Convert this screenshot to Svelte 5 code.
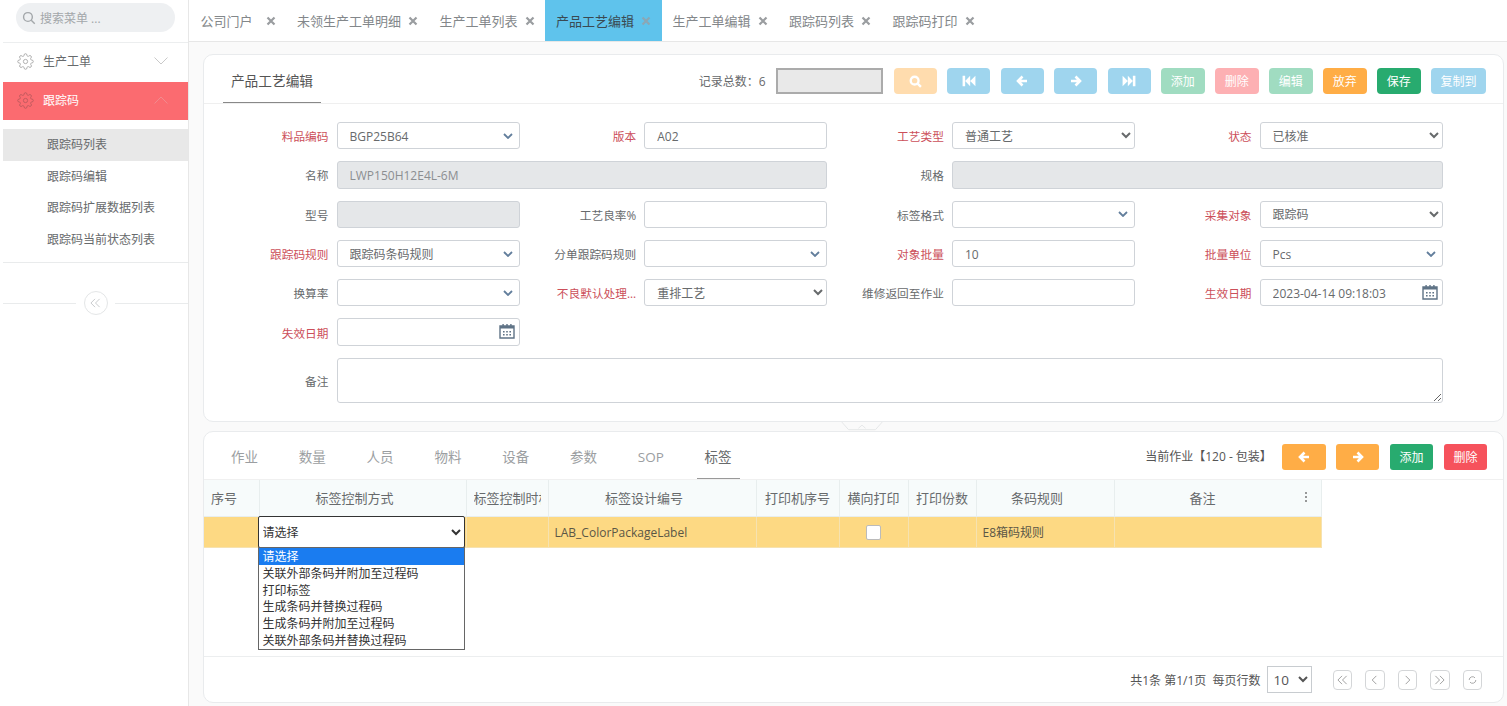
<script>
  const gearPath = "M19.4 15a1.65 1.65 0 0 0 .33 1.82l.06.06a2 2 0 0 1 0 2.83 2 2 0 0 1-2.83 0l-.06-.06a1.65 1.65 0 0 0-1.82-.33 1.65 1.65 0 0 0-1 1.51V21a2 2 0 0 1-2 2 2 2 0 0 1-2-2v-.09A1.65 1.65 0 0 0 9 19.4a1.65 1.65 0 0 0-1.82.33l-.06.06a2 2 0 0 1-2.83 0 2 2 0 0 1 0-2.83l.06-.06a1.65 1.65 0 0 0 .33-1.82 1.65 1.65 0 0 0-1.51-1H3a2 2 0 0 1-2-2 2 2 0 0 1 2-2h.09A1.65 1.65 0 0 0 4.6 9a1.65 1.65 0 0 0-.33-1.82l-.06-.06a2 2 0 0 1 0-2.83 2 2 0 0 1 2.83 0l.06.06a1.65 1.65 0 0 0 1.82.33H9a1.65 1.65 0 0 0 1-1.51V3a2 2 0 0 1 2-2 2 2 0 0 1 2 2v.09a1.65 1.65 0 0 0 1 1.51 1.65 1.65 0 0 0 1.82-.33l.06-.06a2 2 0 0 1 2.83 0 2 2 0 0 1 0 2.83l-.06.06a1.65 1.65 0 0 0-.33 1.82V9a1.65 1.65 0 0 0 1.51 1H21a2 2 0 0 1 2 2 2 2 0 0 1-2 2h-.09a1.65 1.65 0 0 0-1.51 1z";

  const tabs = [
    { name: "公司门户", cls: "wide" },
    { name: "未领生产工单明细" },
    { name: "生产工单列表" },
    { name: "产品工艺编辑", cls: "active" },
    { name: "生产工单编辑" },
    { name: "跟踪码列表" },
    { name: "跟踪码打印" }
  ];

  const subMenu = ["跟踪码列表", "跟踪码编辑", "跟踪码扩展数据列表", "跟踪码当前状态列表"];

  const fields = [
    { label: "料品编码", req: true, type: "select", value: "BGP25B64", blue: true },
    { label: "版本", req: true, type: "input", value: "A02" },
    { label: "工艺类型", req: true, type: "select", value: "普通工艺" },
    { label: "状态", req: true, type: "select", value: "已核准" },
    { label: "名称", type: "disabled", value: "LWP150H12E4L-6M", span: 2 },
    { label: "规格", type: "disabled", value: "", span: 2 },
    { label: "型号", type: "disabled", value: "" },
    { label: "工艺良率%", type: "input", value: "" },
    { label: "标签格式", type: "select", value: "", blue: true },
    { label: "采集对象", req: true, type: "select", value: "跟踪码" },
    { label: "跟踪码规则", req: true, type: "select", value: "跟踪码条码规则", blue: true },
    { label: "分单跟踪码规则", type: "select", value: "", blue: true },
    { label: "对象批量", req: true, type: "input", value: "10" },
    { label: "批量单位", req: true, type: "select", value: "Pcs", blue: true },
    { label: "换算率", type: "select", value: "", blue: true },
    { label: "不良默认处理...", req: true, type: "select", value: "重排工艺" },
    { label: "维修返回至作业", type: "input", value: "" },
    { label: "生效日期", req: true, type: "date", value: "2023-04-14 09:18:03" },
    { label: "失效日期", req: true, type: "date", value: "" },
    { label: "备注", type: "textarea", value: "", span: 4 }
  ];

  const detailTabs = ["作业", "数量", "人员", "物料", "设备", "参数", "SOP", "标签"];

  // pad: room the grid keeps on the right of a wide header
  const columns = [
    { name: "序号", width: 55 },
    { name: "标签控制方式", width: 207, pad: 16 },
    { name: "标签控制时机", width: 82 },
    { name: "标签设计编号", width: 208, pad: 16 },
    { name: "打印机序号", width: 83 },
    { name: "横向打印", width: 69 },
    { name: "打印份数", width: 68 },
    { name: "条码规则", width: 138, pad: 16 },
    { name: "备注", width: 207, pad: 30 }
  ];

  const options = ["请选择", "关联外部条码并附加至过程码", "打印标签", "生成条码并替换过程码", "生成条码并附加至过程码", "关联外部条码并替换过程码"];
</script>

{#snippet close()}
  <svg class="close" viewBox="0 0 10 10"><path d="M1.5 1.5l7 7M8.5 1.5l-7 7" /></svg>
{/snippet}

{#snippet arrowLeft()}
  <svg class="glyph" viewBox="0 0 12 12"><path d="M6.5 1.5L2 6l4.5 4.5M2.5 6H11" /></svg>
{/snippet}

{#snippet arrowRight()}
  <svg class="glyph" viewBox="0 0 12 12"><path d="M5.5 1.5L10 6l-4.5 4.5M9.5 6H1" /></svg>
{/snippet}

{#snippet calendar()}
  <svg class="calendar" viewBox="0 0 16 16">
    <path d="M1 3h14v12H1z" fill="none" stroke="#5f7386" stroke-width="1.4" />
    <path d="M1 3h14v2.6H1zM3.4 1h1.4v3H3.4zM7.3 1h1.4v3H7.3zM11.2 1h1.4v3h-1.4z" fill="#5f7386" />
    <path d="M4 8h1.6v1.4H4zM7.2 8h1.6v1.4H7.2zM10.4 8H12v1.4h-1.6zM4 11h1.6v1.4H4zM7.2 11h1.6v1.4H7.2zM10.4 11H12v1.4h-1.6z" fill="#5f7386" />
  </svg>
{/snippet}

<div class="layout">
  <aside class="sidebar">
    <div class="search">
      <svg class="search-icon" viewBox="0 0 16 16"><circle cx="6.8" cy="6.8" r="5" /><path d="M10.6 10.6l4 4" /></svg>
      <span>搜索菜单 ...</span>
    </div>

    <div class="menu-item">
      <svg class="gear" viewBox="0 0 24 24"><circle cx="12" cy="12" r="3" /><path d={gearPath} /></svg>
      <span class="menu-name">生产工单</span>
      <svg class="chev" viewBox="0 0 14 8"><path d="M.5.5L7 7 13.5.5" /></svg>
    </div>
    <div class="menu-item open">
      <svg class="gear" viewBox="0 0 24 24"><circle cx="12" cy="12" r="3" /><path d={gearPath} /></svg>
      <span class="menu-name">跟踪码</span>
      <svg class="chev" viewBox="0 0 14 8"><path d="M.5 7.5L7 1l6.5 6.5" /></svg>
    </div>

    <ul class="sub-menu">
      {#each subMenu as item, i}
        <li class:current={i === 0}>{item}</li>
      {/each}
    </ul>

    <div class="collapse">
      <span class="collapse-btn">
        <svg viewBox="0 0 12 10"><path d="M5.5.5L1 5l4.5 4.5M10.5.5L6 5l4.5 4.5" /></svg>
      </span>
    </div>
  </aside>

  <div class="main">
    <nav class="tabbar">
      {#each tabs as tab}
        <div class="tab {tab.cls || ''}">
          <span>{tab.name}</span>
          {@render close()}
        </div>
      {/each}
    </nav>

    <div class="content">
      <section class="card top-card">
        <header class="card-head">
          <div class="card-title">产品工艺编辑</div>
          <div class="toolbar">
            <span class="total">记录总数：6</span>
            <input class="jump" type="text" />
            <button class="btn nav orange-soft">
              <svg class="glyph big" viewBox="0 0 12 12"><circle cx="5.2" cy="5.2" r="3.6" /><path d="M8 8l3 3" /></svg>
            </button>
            <button class="btn nav blue-soft">
              <svg class="glyph solid" viewBox="0 0 12 12"><path d="M.5 1.500h2.200v9H.5zM2.700 6l4.300-4.500v9zM7 6l4.500-4.500v9z" /></svg>
            </button>
            <button class="btn nav blue-soft">{@render arrowLeft()}</button>
            <button class="btn nav blue-soft">{@render arrowRight()}</button>
            <button class="btn nav blue-soft">
              <svg class="glyph solid" viewBox="0 0 12 12"><path d="M11.500 1.500H9.300v9h2.200zM9.300 6L5 1.500v9zM5 6L.5 1.500v9z" /></svg>
            </button>
            <button class="btn green-soft">添加</button>
            <button class="btn red-soft">删除</button>
            <button class="btn green-soft">编辑</button>
            <button class="btn orange">放弃</button>
            <button class="btn green">保存</button>
            <button class="btn blue-soft copy">复制到</button>
          </div>
        </header>

        <div class="form">
          {#each fields as f}
            <div class="field" class:span2={f.span === 2} class:span4={f.span === 4}>
              <label class:req={f.req}>{f.label}</label>
              {#if f.type === "select"}
                <select class="control" class:blue={f.blue}>
                  <option>{f.value}</option>
                </select>
              {:else if f.type === "textarea"}
                <textarea class="control area"></textarea>
              {:else if f.type === "date"}
                <div class="date-wrap">
                  <input class="control" type="text" value={f.value} />
                  {@render calendar()}
                </div>
              {:else}
                <input class="control" type="text" value={f.value} disabled={f.type === "disabled"} />
              {/if}
            </div>
          {/each}
        </div>
      </section>

      <div class="splitter">
        <svg viewBox="0 0 46 10"><path d="M.5 0L8 8.5h30L45.5 0" /><path d="M19 7l4-3.5L27 7" /></svg>
      </div>

      <section class="card bottom-card">
        <header class="detail-head">
          <div class="detail-tabs">
            {#each detailTabs as t, i}
              <span class="detail-tab" class:on={i === detailTabs.length - 1}>{t}</span>
            {/each}
          </div>
          <div class="detail-tools">
            <span class="current-op">当前作业【120 - 包装】</span>
            <button class="btn orange op">{@render arrowLeft()}</button>
            <button class="btn orange op">{@render arrowRight()}</button>
            <button class="btn green op">添加</button>
            <button class="btn danger op">删除</button>
          </div>
        </header>

        <div class="table-wrap">
          <table>
            <colgroup>
              {#each columns as c}
                <col style="width: {c.width}px" />
              {/each}
            </colgroup>
            <thead>
              <tr>
                {#each columns as c, i}
                  <th>
                    <div class="th-inner" class:first={i === 0} style="padding-right: {c.pad || 0}px">{c.name}</div>
                    {#if i === columns.length - 1}
                      <svg class="dots" viewBox="0 0 4 12"><circle cx="2" cy="2" r="1" /><circle cx="2" cy="6" r="1" /><circle cx="2" cy="10" r="1" /></svg>
                    {/if}
                  </th>
                {/each}
              </tr>
            </thead>
            <tbody>
              <tr>
                <td></td>
                <td class="select-cell">
                  <select class="row-select"><option>请选择</option></select>
                  <div class="dropdown">
                    {#each options as o, i}
                      <div class="opt" class:picked={i === 0}>{o}</div>
                    {/each}
                  </div>
                </td>
                <td></td>
                <td>LAB_ColorPackageLabel</td>
                <td></td>
                <td class="center"><input class="check" type="checkbox" /></td>
                <td></td>
                <td>E8箱码规则</td>
                <td></td>
              </tr>
            </tbody>
          </table>
        </div>

        <footer class="pager">
          <span>共1条 第1/1页&nbsp; 每页行数</span>
          <select class="page-size"><option>10</option></select>
          <div class="pager-btns">
            <button class="pg"><svg viewBox="0 0 12 10"><path d="M5.5.5L1 5l4.5 4.5M10.5.5L6 5l4.5 4.5" /></svg></button>
            <button class="pg"><svg viewBox="0 0 12 10"><path d="M8 .5L3.5 5 8 9.5" /></svg></button>
            <button class="pg"><svg viewBox="0 0 12 10"><path d="M4 .5L8.5 5 4 9.5" /></svg></button>
            <button class="pg"><svg viewBox="0 0 12 10"><path d="M1.500 .5L6 5l-4.500 4.500M6.500 .5L11 5l-4.500 4.500" /></svg></button>
            <button class="pg"><svg viewBox="0 0 12 12"><path d="M2 6a4 4 0 0 1 7-2.600M10 6a4 4 0 0 1-7 2.600" /></svg></button>
          </div>
        </footer>
      </section>
    </div>
  </div>
</div>

<style>
  :global(body) {
    margin: 0;
    background: #fff;
    overflow: hidden;
  }

  .layout {
    display: flex;
    width: 1507px;
    height: 706px;
    overflow: hidden;
    font-family: "Open Sans", "Noto Sans CJK SC", sans-serif;
    font-size: 12px;
    color: #676a6c;
  }

  button, input, select, textarea {
    font-family: inherit;
  }

  /* sidebar */
  .sidebar {
    width: 189px;
    flex-shrink: 0;
    box-sizing: border-box;
    padding-left: 3px;
    border-right: 1px solid #e7e7e7;
  }

  .search {
    display: flex;
    align-items: center;
    gap: 4px;
    height: 29px;
    width: 159px;
    margin: 3px 0 10px 13px;
    padding-left: 6px;
    box-sizing: border-box;
    border-radius: 15px;
    background: #eef0f2;
    color: #a3a7aa;
  }

  .search-icon {
    width: 14px;
    height: 14px;
    fill: none;
    stroke: #a3a7aa;
    stroke-width: 1.6;
  }

  .menu-item {
    display: flex;
    align-items: center;
    height: 36px;
    padding: 0 20px 3px 14px;
    border-top: 1px solid #eceeef;
    color: #676a6c;
    font-size: 12px;
  }

  .menu-item.open {
    height: 36px;
    padding-bottom: 2px;
    border-top: 0;
    background: #fb6b70;
    color: #fff;
  }

  .gear {
    width: 17px;
    height: 17px;
    margin-right: 9px;
    fill: none;
    stroke: #a4a4a4;
    stroke-width: 1.2;
  }

  .open .gear {
    stroke: #b9585c;
  }

  .menu-name {
    flex: 1;
  }

  .chev {
    width: 14px;
    height: 8px;
    fill: none;
    stroke: #bbb;
    stroke-width: 0.8;
  }

  .open .chev {
    stroke: #f09295;
  }

  .sub-menu {
    list-style: none;
    margin: 9px 0 0;
    padding: 0 0 7px;
    border-bottom: 1px solid #e9ebec;
  }

  .sub-menu li {
    height: 31.5px;
    line-height: 31px;
    padding-left: 44px;
    color: #676a6c;
  }

  .sub-menu li.current {
    background: #e8e8e8;
  }

  .collapse {
    display: flex;
    align-items: center;
    margin-top: 28px;
    height: 24px;
    background: linear-gradient(#e9ebec, #e9ebec) left center / 73px 1px no-repeat,
      linear-gradient(#e9ebec, #e9ebec) right center / 73px 1px no-repeat;
    justify-content: center;
  }

  .collapse-btn {
    display: flex;
    align-items: center;
    justify-content: center;
    width: 22px;
    height: 22px;
    border: 1px solid #e4e6e7;
    border-radius: 50%;
  }

  .collapse-btn svg {
    width: 11px;
    height: 10px;
    fill: none;
    stroke: #c4c6c8;
  }

  /* tabs */
  .main {
    flex: 1;
    min-width: 0;
    display: flex;
    flex-direction: column;
  }

  .tabbar {
    display: flex;
    height: 42px;
    box-sizing: border-box;
    border-bottom: 1px solid #e7e7e7;
    font-size: 13px;
    color: #83878a;
    padding-left: 0.5px;
    flex-shrink: 0;
  }

  .tab {
    display: flex;
    align-items: center;
    gap: 7px;
    padding: 0 10.5px 0 11px;
  }

  .tab.wide {
    gap: 13px;
  }

  .tab.active {
    background: #5fc3ec;
    color: #3a4a52;
  }

  .close {
    width: 10px;
    height: 10px;
    fill: none;
    stroke: #9a9da0;
    stroke-width: 2.2;
  }

  .active .close {
    stroke: #8ba7b5;
  }

  /* cards */
  .content {
    flex: 1;
    background: #fafafa;
    padding: 12px 3px 0 14px;
  }

  .card {
    background: #fff;
    border: 1px solid #e9ebed;
    border-radius: 10px;
  }

  .top-card {
    height: 368px;
    box-sizing: border-box;
  }

  .card-head {
    display: flex;
    justify-content: space-between;
    align-items: flex-start;
    height: 49px;
    box-sizing: border-box;
    border-bottom: 1px solid #efefef;
    padding-left: 19px;
  }

  .card-title {
    height: 48px;
    box-sizing: border-box;
    width: 98px;
    text-align: center;
    padding-top: 16px;
    line-height: 20px;
    font-size: 13.700px;
    color: #555;
    border-bottom: 1px solid #888;
  }

  .toolbar {
    display: flex;
    align-items: center;
    gap: 10.500px;
    margin-top: 13px;
    padding-right: 17px;
  }

  .total {
    color: #676a6c;
  }

  .jump {
    width: 107px;
    height: 26px;
    box-sizing: border-box;
    border: 2px solid #ababab;
    background: #e9e9e9;
  }

  .btn {
    height: 26px;
    width: 43.500px;
    padding: 0;
    border: 0;
    border-radius: 4px;
    color: #fff;
    font-size: 12px;
    display: flex;
    align-items: center;
    justify-content: center;
  }

  .btn.nav {
    width: 43px;
  }

  .btn.copy {
    width: 55px;
  }

  .orange-soft { background: #ffdcae; }
  .blue-soft { background: #9fd5ee; }
  .green-soft { background: #a0dcc1; }
  .red-soft { background: #fdb0b3; }
  .orange { background: #ffad46; }
  .green { background: #28ab6f; }
  .danger { background: #f6525c; }

  .glyph {
    width: 12px;
    height: 12px;
    fill: none;
    stroke: #fff;
    stroke-width: 2.6;
  }

  .glyph.big {
    width: 13px;
    height: 13px;
    stroke-width: 2.2;
  }

  .glyph.solid {
    width: 14px;
    height: 14px;
    fill: #fff;
    stroke: none;
  }

  /* form */
  .form {
    display: grid;
    grid-template-columns: repeat(4, 307.7px);
    grid-auto-rows: 27.300px;
    row-gap: 12px;
    padding: 18px 0 0 8px;
  }

  .field {
    display: flex;
    align-items: stretch;
    min-width: 0;
  }

  .span2 { grid-column: span 2; }
  .span4 { grid-column: span 4; height: 45.500px; }

  label {
    width: 116.500px;
    flex-shrink: 0;
    margin-right: 8px;
    text-align: right;
    align-self: center;
    font-size: 11.700px;
    color: #676a6c;
    white-space: nowrap;
  }

  label.req {
    color: #cc4f5a;
  }

  .control {
    flex: 1;
    min-width: 0;
    width: 100%;
    box-sizing: border-box;
    height: 100%;
    margin: 0;
    padding: 1px 12px 0;
    background: #fff;
    border: 1px solid #cfd3d8;
    border-radius: 3px;
    font-size: 12px;
    color: #676a6c;
    outline: none;
  }

  select.control {
    padding: 1px 8px 0;
  }

  select.control.blue {
    appearance: none;
    background: #fff url("data:image/svg+xml,%3Csvg xmlns='http://www.w3.org/2000/svg' viewBox='0 0 10 6'%3E%3Cpath d='M1 1l4 4 4-4' fill='none' stroke='%23627e9c' stroke-width='1.800'/%3E%3C/svg%3E") no-repeat right 6px center / 10px 6px;
    padding: 1px 12px 0;
  }

  .control:disabled {
    background: #e5e7e9;
    color: #8b8e91;
  }

  .area {
    resize: vertical;
    padding: 6px 12px;
  }

  .date-wrap {
    position: relative;
    flex: 1;
    min-width: 0;
  }

  .calendar {
    position: absolute;
    right: 5px;
    top: 5px;
    width: 16px;
    height: 16px;
  }

  /* splitter */
  .splitter {
    height: 9px;
    display: flex;
    justify-content: center;
    padding-left: 16px;
  }

  .splitter svg {
    width: 46px;
    height: 9px;
    fill: none;
    stroke: #e3e5e7;
  }

  /* detail */
  .bottom-card {
    height: 272px;
    box-sizing: border-box;
    display: flex;
    flex-direction: column;
  }

  .detail-head {
    display: flex;
    justify-content: space-between;
    height: 48px;
    box-sizing: border-box;
    flex-shrink: 0;
    border-bottom: 1px solid #f0f0f0;
    padding: 0 16px 0 19px;
  }

  .detail-tabs {
    display: flex;
  }

  .detail-tab {
    height: 47px;
    box-sizing: border-box;
    padding: 15px 8px 0;
    margin-right: 24.800px;
    line-height: 20px;
    font-size: 13.500px;
    color: #9b9ea1;
    border-bottom: 1px solid transparent;
  }

  .detail-tab.on {
    color: #676a6c;
    border-bottom-color: #999;
  }

  .detail-tools {
    display: flex;
    align-items: flex-start;
    gap: 10.600px;
    padding-top: 12px;
  }

  .current-op {
    line-height: 26px;
    color: #555;
  }

  .btn.op {
    width: 43.200px;
    border-radius: 3px;
  }

  /* table */
  .table-wrap {
    flex: 1;
    min-height: 0;
    border-bottom: 1px solid #eceeef;
  }

  table {
    width: 1117px;
    table-layout: fixed;
    border-collapse: collapse;
  }

  th {
    position: relative;
    height: 34px;
    padding: 0 0 2px;
    background: #f7fbfb;
    border: 1px solid #e8eeee;
    border-top: 0;
    font-weight: 400;
    font-size: 13px;
    color: #676a6c;
  }

  th:first-child {
    border-left: 0;
  }

  .th-inner {
    margin: 0 7px;
    overflow: hidden;
    white-space: nowrap;
  }

  .th-inner.first {
    text-align: left;
  }

  .dots {
    position: absolute;
    right: 13px;
    top: 11px;
    width: 4px;
    height: 12px;
    fill: #777;
  }

  td {
    height: 31px;
    box-sizing: border-box;
    padding: 0 6px;
    background: #fdd983;
    border: 1px solid #f6e2b0;
    border-top: 0;
    font-size: 12px;
    color: #5a5646;
    white-space: nowrap;
  }

  td:first-child {
    border-left: 0;
  }

  .center {
    text-align: center;
  }

  .check {
    appearance: none;
    display: block;
    margin: 0 auto;
    width: 15px;
    height: 15px;
    background: #fff;
    border: 1px solid #bbb;
    border-radius: 2px;
  }

  .select-cell {
    position: relative;
    padding: 0;
  }

  .row-select {
    position: absolute;
    left: -2px;
    top: -1px;
    width: 207px;
    height: 32px;
    box-sizing: border-box;
    background: #fff;
    border: 1px solid #333;
    border-radius: 2px;
    padding: 0;
    color: #333;
    font-size: 12px;
  }

  .dropdown {
    position: absolute;
    z-index: 2;
    left: -2px;
    top: 30px;
    width: 207px;
    box-sizing: border-box;
    border: 1px solid #666;
    background: #fff;
    color: #333;
    font-size: 12px;
  }

  .opt {
    height: 16.800px;
    line-height: 18px;
    padding-left: 4px;
  }

  .opt.picked {
    background: #1a7cf0;
    color: #fff;
  }

  /* pager */
  .pager {
    display: flex;
    align-items: center;
    justify-content: flex-end;
    height: 45px;
    flex-shrink: 0;
    padding-right: 21px;
    color: #555;
  }

  .page-size {
    width: 45px;
    height: 27px;
    margin-left: 6px;
    padding: 0 0 0 2px;
    background: #fff;
    border: 1px solid #c8ccd0;
    color: #555;
    font-size: 13.500px;
  }

  .pager-btns {
    display: flex;
    gap: 13px;
    margin-left: 21px;
  }

  .pg {
    display: flex;
    align-items: center;
    justify-content: center;
    width: 19.500px;
    height: 20px;
    padding: 0;
    background: #fff;
    border: 1px solid #d4d6d8;
    border-radius: 4px;
  }

  .pg svg {
    width: 11px;
    height: 10px;
    fill: none;
    stroke: #999;
  }
</style>
